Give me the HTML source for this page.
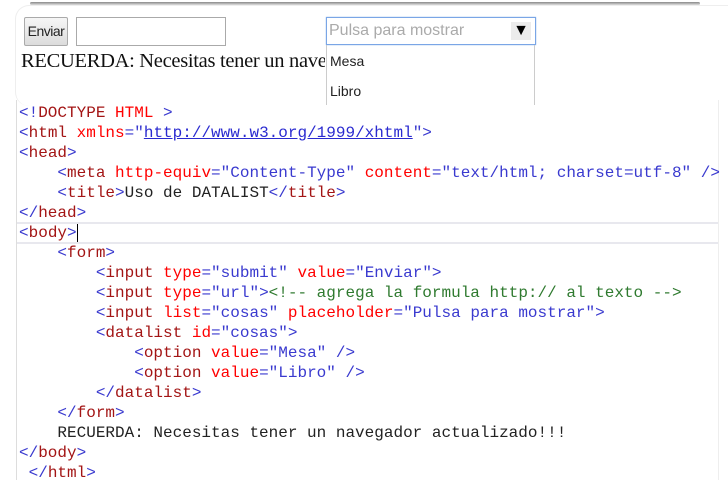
<!DOCTYPE html>
<html><head><meta charset="utf-8"><style>
body{margin:0;width:728px;height:480px;overflow:hidden;background:#fff;position:relative;font-family:"Liberation Sans",sans-serif}
.abs{position:absolute}
.topline{left:30px;top:2px;width:670px;height:3px;background:linear-gradient(#888,#ddd);border-radius:2px}
.card{left:15px;top:5px;width:740px;height:100px;border:1px solid #eee;border-radius:14px;border-bottom:none}
.btn{left:24px;top:17px;width:42px;height:27px;border:1px solid #aaa;border-radius:2px;background:linear-gradient(#f6f6f6,#dcdcdc);font-size:14px;line-height:27px;text-align:center;color:#222;letter-spacing:-0.5px}
.inp{left:76px;top:17px;width:148px;height:27px;border:1px solid #aaa}
.dl{left:326px;top:17px;width:206px;height:26px;border:1px solid #7aa6e6;box-shadow:0 0 1px #7aa6e6;font-size:16px;line-height:26px;color:#aaa;padding-left:2px;box-sizing:content-box}
.arr{right:4px;top:4px;width:20px;height:18px;background:#ececec;color:#000;font-size:16px;line-height:18px;text-align:center}
.drop{left:326px;top:45px;width:207px;height:60px;border-left:1px solid #ccc;border-right:1px solid #ccc;font-size:14px;color:#222}
.rec{left:21px;top:50px;font-family:"Liberation Serif",serif;font-size:20.5px;letter-spacing:-0.3px;color:#111;white-space:nowrap;width:304px;overflow:hidden}
.code{left:19px;top:103px;font-family:"Liberation Mono",monospace;font-size:16px;line-height:20px;white-space:pre;color:#222}
.leftline{left:16px;top:100px;width:1px;height:380px;background:#ddd}
.rightline{left:718px;top:100px;width:1px;height:380px;background:#eee}
.hl1{left:17px;top:222px;width:701px;height:2px;background:#e8e8ee}
.hl2{left:17px;top:242px;width:701px;height:2px;background:#e8e8ee}
.p{color:#3a3acf}.t{color:#a31515}.a{color:#f00}.v{color:#2a2ad0}.c{color:#2f7a2f}.u{color:#2a2ad0;text-decoration:underline}
</style></head><body>
<div class="abs topline"></div>
<div class="abs card"></div>
<div class="abs btn">Enviar</div>
<div class="abs inp"></div>
<div class="abs dl">Pulsa para mostrar<div class="abs arr">▼</div></div>
<div class="abs drop"><div style="position:absolute;left:3px;top:8px">Mesa</div><div style="position:absolute;left:3px;top:38px">Libro</div></div>
<div class="abs rec">RECUERDA: Necesitas tener un navegador</div>
<div class="abs leftline"></div>
<div class="abs rightline"></div>
<div class="abs hl1"></div>
<div class="abs hl2"></div>
<div class="abs code"><span class="p">&lt;!</span><span class="t">DOCTYPE</span> <span class="a">HTML</span> <span class="p">&gt;</span>
<span class="p">&lt;</span><span class="t">html</span> <span class="a">xmlns</span><span class="p">="</span><span class="u">http://www.w3.org/1999/xhtml</span><span class="p">"&gt;</span>
<span class="p">&lt;</span><span class="t">head</span><span class="p">&gt;</span>
    <span class="p">&lt;</span><span class="t">meta</span> <span class="a">http-equiv</span><span class="p">="Content-Type"</span> <span class="a">content</span><span class="p">="text/html; charset=utf-8" /&gt;</span>
    <span class="p">&lt;</span><span class="t">title</span><span class="p">&gt;</span>Uso de DATALIST<span class="p">&lt;/</span><span class="t">title</span><span class="p">&gt;</span>
<span class="p">&lt;/</span><span class="t">head</span><span class="p">&gt;</span>
<span class="p">&lt;</span><span class="t">body</span><span class="p">&gt;</span><span style="border-left:1px solid #000"></span>
    <span class="p">&lt;</span><span class="t">form</span><span class="p">&gt;</span>
        <span class="p">&lt;</span><span class="t">input</span> <span class="a">type</span><span class="p">="submit"</span> <span class="a">value</span><span class="p">="Enviar"&gt;</span>
        <span class="p">&lt;</span><span class="t">input</span> <span class="a">type</span><span class="p">="url"&gt;</span><span class="c">&lt;!-- agrega la formula http:// al texto --&gt;</span>
        <span class="p">&lt;</span><span class="t">input</span> <span class="a">list</span><span class="p">="cosas"</span> <span class="a">placeholder</span><span class="p">="Pulsa para mostrar"&gt;</span>
        <span class="p">&lt;</span><span class="t">datalist</span> <span class="a">id</span><span class="p">="cosas"&gt;</span>
            <span class="p">&lt;</span><span class="t">option</span> <span class="a">value</span><span class="p">="Mesa" /&gt;</span>
            <span class="p">&lt;</span><span class="t">option</span> <span class="a">value</span><span class="p">="Libro" /&gt;</span>
        <span class="p">&lt;/</span><span class="t">datalist</span><span class="p">&gt;</span>
    <span class="p">&lt;/</span><span class="t">form</span><span class="p">&gt;</span>
    RECUERDA: Necesitas tener un navegador actualizado!!!
<span class="p">&lt;/</span><span class="t">body</span><span class="p">&gt;</span>
 <span class="p">&lt;/</span><span class="t">html</span><span class="p">&gt;</span></div>
</body></html>
